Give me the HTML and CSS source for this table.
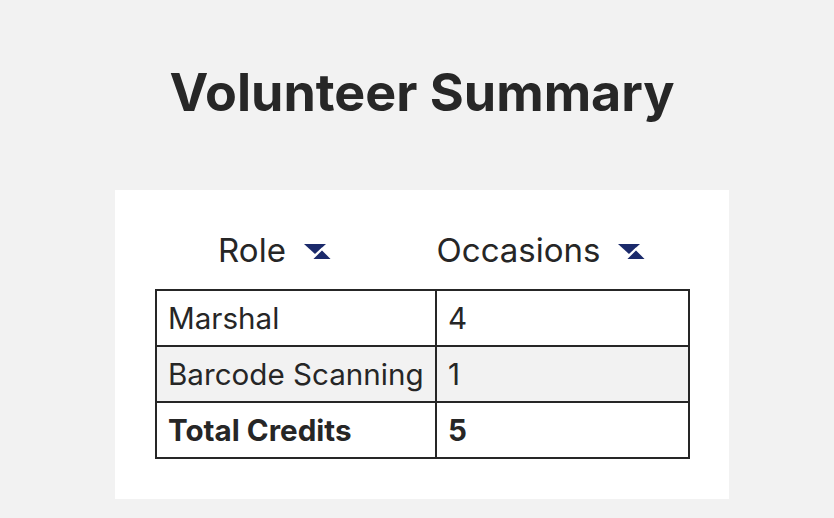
FILE: index.html
```html
<!DOCTYPE html>
<html lang="en">
<head>
<meta charset="utf-8">
<title>Volunteer Summary</title>
<link rel="stylesheet" href="styles.css">
</head>
<body>
<main class="page">
  <h1 class="title">Volunteer Summary</h1>
  <section class="card">
    <table class="summary">
      <colgroup>
        <col class="col-role">
        <col class="col-occ">
      </colgroup>
      <thead>
        <tr>
          <th class="head"><span class="head-inner">Role<svg class="sort" viewBox="0 0 30 18" aria-hidden="true"><polygon points="0,1 22,1 11,11" fill="#1b2a6b"/><polygon points="7,17 29,17 18,6" fill="#1b2a6b" stroke="#ffffff" stroke-width="2" stroke-linejoin="miter"/></svg></span></th>
          <th class="head"><span class="head-inner">Occasions<svg class="sort" viewBox="0 0 30 18" aria-hidden="true"><polygon points="0,1 22,1 11,11" fill="#1b2a6b"/><polygon points="7,17 29,17 18,6" fill="#1b2a6b" stroke="#ffffff" stroke-width="2" stroke-linejoin="miter"/></svg></span></th>
        </tr>
      </thead>
      <tbody>
        <tr class="row">
          <td class="cell">Marshal</td>
          <td class="cell">4</td>
        </tr>
        <tr class="row row-alt">
          <td class="cell">Barcode Scanning</td>
          <td class="cell">1</td>
        </tr>
        <tr class="row row-total">
          <td class="cell">Total Credits</td>
          <td class="cell">5</td>
        </tr>
      </tbody>
    </table>
  </section>
</main>
</body>
</html>
```
FILE: styles.css
```css
* { box-sizing: border-box; }

html, body {
  margin: 0;
  padding: 0;
  background: #f2f2f2;
}

body {
  font-family: Inter, "Liberation Sans", sans-serif;
  color: #262626;
}

.page {
  display: flex;
  flex-direction: column;
  align-items: center;
  padding-left: 10px;
}

.title {
  margin: 61px 0 65px;
  font-size: 52px;
  line-height: 64px;
  font-weight: 700;
  color: #272727;
}

.card {
  width: 614px;
  background: #ffffff;
  padding: 34px 40px 40px;
}

.summary {
  width: 533px;
  table-layout: fixed;
  border-collapse: collapse;
}

.col-role { width: 280px; }
.col-occ { width: 253px; }

.head {
  padding: 0 40px 14px 0;
  font-size: 33px;
  font-weight: 400;
  text-align: center;
  height: 66px;
}

.head-inner {
  display: inline-flex;
  align-items: center;
  gap: 18px;
  white-space: nowrap;
}

.sort {
  width: 30px;
  height: 18px;
  margin-top: 4px;
}

.row { height: 56px; }

.cell {
  border: 2px solid #262626;
  padding: 0 11px;
  font-size: 29.6px;
  vertical-align: middle;
  white-space: nowrap;
}

.row-alt { background: #f2f2f2; }

.row-total .cell { font-weight: 700; }
```
